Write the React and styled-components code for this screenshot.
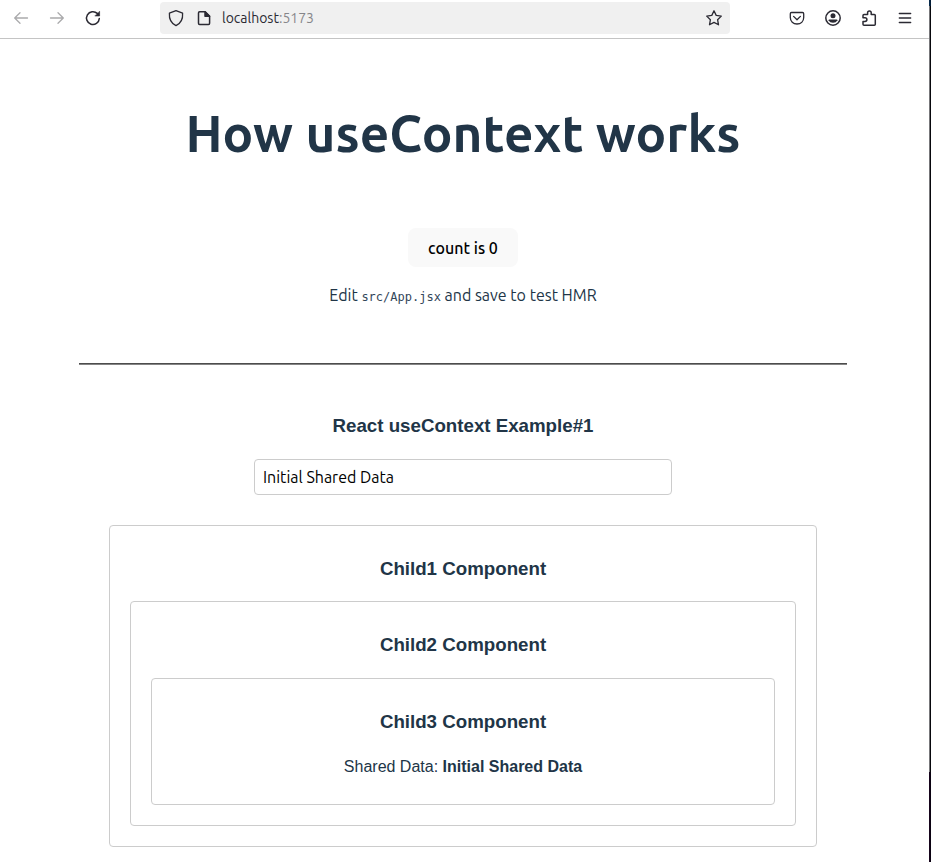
import React, { useState } from "react";
import styled, { createGlobalStyle } from "styled-components";

const GlobalStyle = createGlobalStyle`
  * { box-sizing: border-box; }
  html, body { margin: 0; padding: 0; background: #fff; overflow: hidden; }
`;

const uiFont = `Ubuntu, "Noto Sans", "Open Sans", sans-serif`;
const bodyFont = `"Liberation Sans", Arial, sans-serif`;

const Window = styled.div`
  display: flex;
  width: 931px;
  height: 862px;
  overflow: hidden;
  background: #fff;
`;

const Browser = styled.div`
  flex: 1;
  min-width: 0;
  display: flex;
  flex-direction: column;
`;

const DesktopEdge = styled.div`
  display: grid;
  grid-template-rows: 6px 766px 1fr;
  width: 2px;
`;

const EdgeBand = styled.div`
  background: linear-gradient(90deg, ${(p) => p.$left} 50%, ${(p) => p.$right} 50%);
`;

const Toolbar = styled.header`
  display: flex;
  align-items: center;
  height: 39px;
  padding: 0 15px 2px 12px;
  border-bottom: 1px solid #c4c4c4;
  color: #2b2a33;
`;

const NavButtons = styled.nav`
  display: flex;
  gap: 18px;
  width: 148px;
`;

const Icon = styled.svg`
  display: block;
  flex: none;
  width: 18px;
  height: 18px;
  fill: none;
  stroke: ${(p) => (p.$muted ? "#aaaaac" : "#2b2a33")};
  stroke-width: ${(p) => p.$weight || 1.3};
  stroke-linecap: round;
  stroke-linejoin: round;
`;

const AddressBar = styled.div`
  display: flex;
  align-items: center;
  gap: 10px;
  width: 570px;
  height: 32px;
  padding: 0 7px;
  border-radius: 4px;
  background: #f0f0f0;
`;

const Address = styled.span`
  flex: 1;
  margin-left: -1px;
  font: 14px/20px ${uiFont};
  color: #2b2a33;
`;

const Port = styled.span`
  color: #86868a;
`;

const Actions = styled.div`
  display: flex;
  gap: 18px;
  margin-left: auto;
`;

const Page = styled.main`
  display: flex;
  flex-direction: column;
  align-items: center;
  width: 926px;
  color: #213547;
  font-family: ${bodyFont};
`;

const Title = styled.h1`
  margin: 66px 0 0;
  font: 700 51.2px/56px ${uiFont};
  letter-spacing: 0.1px;
  white-space: nowrap;
`;

const CountButton = styled.button`
  width: 110px;
  height: 39px;
  margin-top: 67px;
  padding: 1px 0 0;
  border: 0;
  border-radius: 8px;
  background: #f9f9f9;
  color: #000;
  font: 500 16px/24px ${uiFont};
`;

const Hint = styled.p`
  margin: 16px 0 0;
  font: 400 16px/24px ${uiFont};
  white-space: nowrap;
`;

const Code = styled.code`
  color: #33465a;
  font: 400 12px/20px "DejaVu Sans Mono", monospace;
`;

const Divider = styled.hr`
  width: 768px;
  height: 2px;
  margin: 56px 0 0;
  border: 0;
  border-top: 1px solid #4c4c4c;
  background: #858585;
`;

const Heading = styled.h3`
  margin: 0;
  font-size: 18.72px;
  line-height: 45px;
  font-weight: 700;
  text-align: center;
`;

const Section = styled.section`
  display: flex;
  flex-direction: column;
  align-items: center;
  width: 708px;
  padding-top: 38px;
`;

const TextField = styled.input`
  width: 418px;
  height: 36px;
  margin: 11px 0 30px;
  padding: 0 8px;
  border: 1px solid #ccc;
  border-radius: 4px;
  outline: 0;
  background: #fff;
  color: #000;
  font: 400 16px/24px ${uiFont};
`;

const Panel = styled.div`
  width: 100%;
  padding: 20px;
  border: 1px solid #ccc;
  border-radius: 4px;
`;

const PanelHeading = styled(Heading)`
  margin-bottom: 10.4px;
`;

const SharedData = styled.p`
  margin: 0;
  padding: 0.8px 0 5px;
  font-size: 16px;
  line-height: 24px;
  text-align: center;
`;

const BackIcon = () => (
  <Icon $muted viewBox="0 0 18 18"><path d="M15.5 9H3M8 3.8L2.7 9L8 14.2" /></Icon>
);
const ForwardIcon = () => (
  <Icon $muted viewBox="0 0 18 18"><path d="M2.5 9H15M10 3.8L15.3 9L10 14.2" /></Icon>
);
const ReloadIcon = () => (
  <Icon $weight={1.5} viewBox="0 0 18 18">
    <path d="M15.3 9.6A6.4 6.4 0 1 1 13.3 4.4" />
    <path d="M15.6 2.6V7H11.2Z" fill="#2b2a33" strokeWidth=".6" />
  </Icon>
);
const ShieldIcon = () => (
  <Icon viewBox="0 0 18 18"><path d="M9 1.6L15.6 4.2C16 9.9 13.9 14.3 9 16.6C4.1 14.3 2 9.9 2.4 4.2Z" /></Icon>
);
const PageIcon = () => (
  <Icon $weight={1.5} viewBox="0 0 18 18">
    <path d="M4.6 2.8H10.2L14.6 7.2V14.3Q14.6 15.4 13.5 15.4H4.6Q3.5 15.4 3.5 14.3V3.9Q3.5 2.8 4.6 2.8Z" />
    <path d="M10 2.8V7.2H14.6Z" fill="#2b2a33" />
  </Icon>
);
const StarIcon = () => (
  <Icon viewBox="0 0 18 18"><path d="M9 1.8L11.2 6.4L16.3 7.1L12.6 10.7L13.5 15.8L9 13.4L4.5 15.8L5.4 10.7L1.7 7.1L6.8 6.4Z" /></Icon>
);
const PocketIcon = () => (
  <Icon viewBox="0 0 18 18">
    <path d="M3.5 3.5H14.5Q15.7 3.5 15.7 4.7V8.6C15.7 12.5 12.8 15 9 15S2.3 12.5 2.3 8.6V4.7Q2.3 3.5 3.5 3.5Z" />
    <path d="M5.6 7.4L9 10.7L12.4 7.4" />
  </Icon>
);
const AccountIcon = () => (
  <Icon $weight={1.5} viewBox="0 0 18 18">
    <circle cx="9" cy="9" r="7.2" />
    <circle cx="9" cy="6.8" r="2.5" fill="#2b2a33" stroke="none" />
    <path d="M5.4 10.4H12.6Q13.6 10.4 13.4 11.3C12.6 13 11 13.8 9 13.8S5.4 13 4.6 11.3Q4.4 10.4 5.4 10.4Z" fill="#2b2a33" stroke="none" />
  </Icon>
);
const ExtensionIcon = () => (
  <Icon $weight={1.5} viewBox="0 0 18 18">
    <path d="M4 16.3H14.3Q15.3 16.3 15.3 15.3V6.6Q15.3 5.6 14.3 5.6H11.2V3.8A1.8 1.8 0 0 0 7.6 3.8V5.6H4Q3 5.6 3 6.6V8.7H5A1.9 1.9 0 0 1 5 12.5H3V15.3Q3 16.3 4 16.3Z" />
  </Icon>
);
const MenuIcon = () => (
  <Icon viewBox="0 0 18 18"><path d="M3.3 4.5H14.7M3.3 9H14.7M3.3 13.5H14.7" /></Icon>
);

const SharedDataPanel = ({ value }) => (
  <Panel>
    <PanelHeading>Child3 Component</PanelHeading>
    <SharedData>Shared Data: <strong>{value}</strong></SharedData>
  </Panel>
);

export default function App() {
  const [count, setCount] = useState(0);
  const [shared, setShared] = useState("Initial Shared Data");
  return (
    <>
      <GlobalStyle />
      <Window>
        <Browser>
          <Toolbar>
            <NavButtons><BackIcon /><ForwardIcon /><ReloadIcon /></NavButtons>
            <AddressBar>
              <ShieldIcon />
              <PageIcon />
              <Address>localhost<Port>:5173</Port></Address>
              <StarIcon />
            </AddressBar>
            <Actions><PocketIcon /><AccountIcon /><ExtensionIcon /><MenuIcon /></Actions>
          </Toolbar>
          <Page>
            <Title>How useContext works</Title>
            <CountButton onClick={() => setCount(count + 1)}>count is {count}</CountButton>
            <Hint>Edit <Code>src/App.jsx</Code> and save to test HMR</Hint>
            <Divider />
            <Section>
              <Heading>React useContext Example#1</Heading>
              <TextField value={shared} onChange={(e) => setShared(e.target.value)} />
              <Panel>
                <PanelHeading>Child1 Component</PanelHeading>
                <Panel>
                  <PanelHeading>Child2 Component</PanelHeading>
                  <SharedDataPanel value={shared} />
                </Panel>
              </Panel>
            </Section>
          </Page>
        </Browser>
        <DesktopEdge>
          <EdgeBand $left="#06294a" $right="#031d38" />
          <EdgeBand $left="#77777a" $right="#08080c" />
          <EdgeBand $left="#16041c" $right="#0b0212" />
        </DesktopEdge>
      </Window>
    </>
  );
}
